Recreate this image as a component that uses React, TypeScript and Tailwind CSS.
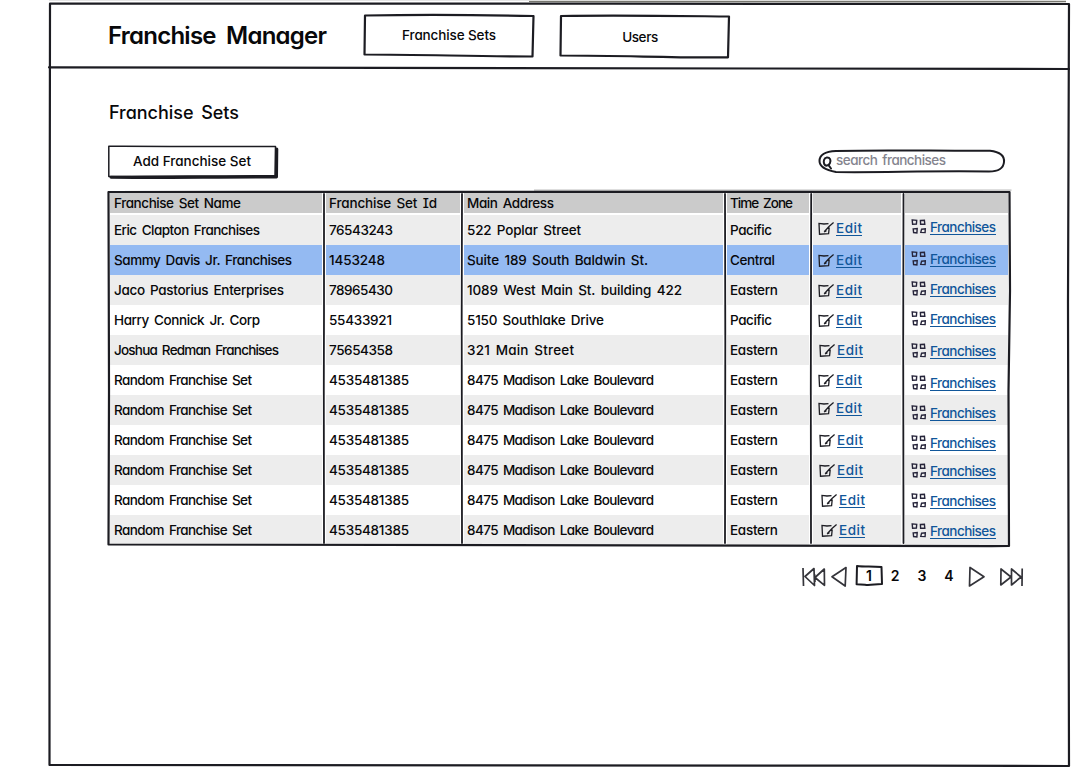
import { useLayoutEffect, useRef, useState } from "react";

const INK = "#1c1c22";

/** Text whose letter spacing is tuned so that it fills the given width. */
function Fit({ w, className = "", children }: { w: number; className?: string; children: string }) {
  const ref = useRef<HTMLSpanElement>(null);
  const [spacing, setSpacing] = useState(0);
  useLayoutEffect(() => {
    if (ref.current && children.length > 1) {
      const natural = ref.current.getBoundingClientRect().width;
      setSpacing((w - natural) / (children.length - 1));
    }
  }, []);
  return (
    <span className={`block whitespace-nowrap ${className}`} style={{ width: w }}>
      <span ref={ref} style={{ letterSpacing: spacing }}>
        {children}
      </span>
    </span>
  );
}

function Outline({ d, width = 2.2, className = "" }: { d: string; width?: number; className?: string }) {
  return (
    <svg
      className={`pointer-events-none absolute left-0 top-0 h-full w-full overflow-visible ${className}`}
      fill="none"
      stroke={INK}
      strokeWidth={width}
      strokeLinejoin="round"
      strokeLinecap="round"
    >
      <path d={d} />
    </svg>
  );
}

function EditIcon() {
  return (
    <svg className="h-[13px] w-4 shrink-0" viewBox="0 0 16 13" fill="none" stroke="#1c1c22" strokeWidth="1.3">
      <path d="M10.5 1.6 6 2 1 1.4 1.5 12.2 10.6 11.7 11.2 5.5M15.6.6 11 4.5 6.5 9.5" />
      <path d="M6 10 8.4 8.6" />
    </svg>
  );
}

function GridIcon() {
  return (
    <svg className="h-[15px] w-4 shrink-0" viewBox="0 0 16 15" fill="none" stroke="#26243a" strokeWidth="1.4">
      <path d="M1.2.9 5.7 1.3 5.4 5 1.6 5.2ZM9.4 1.5 13.4 1.2 13.8 5.2 9.6 5.3ZM2.2 9.9 6.2 9.6 5.9 13.9 2.6 13.5ZM10.6 10.2 14.3 9.8 14.1 13.6 9.8 13.4Z" />
    </svg>
  );
}

type Cell = [string, number];
type Row = { name: Cell; id: Cell; address: Cell; zone: Cell; edit: string; sets: string };

const random = {
  name: ["Random Franchise Set", 138] as Cell,
  id: ["4535481385", 80] as Cell,
  address: ["8475 Madison Lake Boulevard", 187] as Cell,
  zone: ["Eastern", 48] as Cell,
};

const rows: Row[] = [
  { name: ["Eric Clapton Franchises", 146], id: ["76543243", 64], address: ["522 Poplar Street", 114], zone: ["Pacific", 42], edit: "pt-[3px] pl-[5px]", sets: "pt-[2px]" },
  { name: ["Sammy Davis Jr. Franchises", 178], id: ["1453248", 56], address: ["Suite 189 South Baldwin St.", 181], zone: ["Central", 45], edit: "pt-[5px] pl-[5px]", sets: "pt-[4px]" },
  { name: ["Jaco Pastorius Enterprises", 170], id: ["78965430", 64], address: ["1089 West Main St. building 422", 215], zone: ["Eastern", 48], edit: "pt-[5px] pl-[5px]", sets: "pt-[4px]" },
  { name: ["Harry Connick Jr. Corp", 146], id: ["55433921", 63], address: ["5150 Southlake Drive", 137], zone: ["Pacific", 42], edit: "pt-[5px] pl-[5px]", sets: "pt-[4px]" },
  { name: ["Joshua Redman Franchises", 165], id: ["75654358", 64], address: ["321 Main Street", 107], zone: ["Eastern", 48], edit: "pt-[5px] pl-[6px]", sets: "pt-[6px]" },
  { ...random, edit: "pt-[5px] pl-[5px]", sets: "pt-[8px]" },
  { ...random, edit: "pt-[3px] pl-[5px]", sets: "pt-[8px]" },
  { ...random, edit: "pt-[5px] pl-[6px]", sets: "pt-[8px]" },
  { ...random, edit: "pt-[5px] pl-[6px]", sets: "pt-[6px]" },
  { ...random, edit: "pt-[5px] pl-[8px]", sets: "pt-[6px]" },
  { ...random, edit: "pt-[5px] pl-[8px]", sets: "pt-[6px]" },
];

const headers: Cell[] = [
  ["Franchise Set Name", 127],
  ["Franchise Set Id", 108],
  ["Main Address", 87],
  ["Time Zone", 63],
  ["", 0],
  ["", 0],
];

const columns = "grid grid-cols-[212px_134px_259px_82px_88px_103px] gap-x-1";

function TableRow({ row, index }: { row: Row; index: number }) {
  const bg = index === 1 ? "bg-[#94baf2]" : index % 2 === 0 ? "bg-[#ededed]" : "bg-white";
  const cells = [row.name, row.id, row.address, row.zone];
  return (
    <div className={`${columns} h-[30px]`}>
      {cells.map(([text, w], i) => (
        <div key={i} className={`${bg} pt-[5px] ${i === 0 ? "pl-1" : "pl-[3px]"}`}>
          <Fit w={w}>{text}</Fit>
        </div>
      ))}
      <div className={`${bg} ${row.edit} flex items-start gap-[2px]`}>
        <span className="pt-[4px]">
          <EditIcon />
        </span>
        <a className="mt-px h-[17px] border-b border-[#10569a] leading-[18px] text-[#10569a]">
          <Fit w={26}>Edit</Fit>
        </a>
      </div>
      <div className={`${bg} ${row.sets} flex items-start gap-[3px] pl-[6px]`}>
        <span className="pt-[2px]">
          <GridIcon />
        </span>
        <a className="mt-px h-[17px] border-b border-[#10569a] leading-[18px] text-[#10569a]">
          <Fit w={66}>Franchises</Fit>
        </a>
      </div>
    </div>
  );
}

export default function App() {
  return (
    <div className="h-[768px] w-[1072px] overflow-hidden bg-white pl-[49px] pt-[3px] text-[13.5px] font-medium leading-5 text-[#08080a] [font-family:'Comic_Sans_MS',Inter,sans-serif] [font-feature-settings:'cv11','cv08'] [word-spacing:2px]">
      <div className="relative h-[763px] w-[1020px]">
        <Outline d="M1 .5 C300 -.5 700 1.5 1020 1 L1019 300 1020 763 C700 762 400 763 .5 762 L.5 400 1 1" />
        <svg className="pointer-events-none absolute left-0 top-0 h-full w-full overflow-visible" fill="none">
          <path d="M480 -1.5H1017" stroke="#77776f" strokeWidth="1.5" />
          <path d="M0 -2.5H480" stroke="#e6e6e6" strokeWidth="1" />
        </svg>

        <header className="relative flex h-[66px] items-start pl-[59px]">
          <Outline d="M0 64.3 C300 64.5 600 66 1020 66" />
          <h1 className="pt-[17px] text-[24px] font-semibold leading-8 [word-spacing:5px]">
            <Fit w={219}>Franchise Manager</Fit>
          </h1>
          <nav className="flex gap-[26px] pl-[37px] pt-[11px]">
            <button className="relative flex h-[43px] w-[170px] justify-center pt-[11px]">
              <Outline d="M1 1.5 C60 .5 120 1 169.5 2 L168.5 42.5 C110 42.5 60 40.5 .5 40.5 Z" />
              <Fit w={94}>Franchise Sets</Fit>
            </button>
            <button className="relative flex h-[43px] w-[170px] justify-center pr-[10px] pt-[13px]">
              <Outline d="M1 2 C60 1 120 2 169 2.5 L168 43.3 C110 44 70 41.5 .5 41.5 Z" />
              <Fit w={36}>Users</Fit>
            </button>
          </nav>
        </header>

        <main className="pl-[59px]">
          <h2 className="pl-px pt-[32px] text-[18px] leading-6 [word-spacing:3px]">
            <Fit w={130}>Franchise Sets</Fit>
          </h2>

          <div className="flex h-[66px] w-[897px] items-start justify-between pt-[20px]">
            <button className="relative flex h-[34px] w-[170px] pl-[25px] pt-[6px]">
              <Outline d="M3 32.3 C60 33 120 31.5 168.5 32 L168.8 4" width={3} />
              <Outline d="M.8 1.2 C60 1 120 2 167.5 1.5 L167 30.5 C110 31.5 50 30.5 .8 31.5 Z" width={1.5} />
              <Fit w={118}>Add Franchise Set</Fit>
            </button>
            <div className="relative mt-[5px] flex h-[23px] w-[186px] pl-[17px]">
              <Outline
                d="M17 1 C70 -.5 120 1.2 171 .8 C182 2 185.5 6 185 12 C184.5 18 179 21.5 170 21.5 C110 20.5 60 22.8 17 22 C6 20 .5 17 .5 11 C.5 5 6 1.5 17 1 Z"
                width={2}
              />
              <Outline
                d="M7.8 7.6 C4.8 8 4.2 11.5 5.2 14 C6.4 16.5 9.5 16 10.9 13.2 C12.2 10 11.2 7.5 7.8 7.6 M9.5 15.2 12 18.5"
                width={2}
              />
              <Fit w={110} className="text-[#84848e]">
                search franchises
              </Fit>
            </div>
          </div>

          <section className="relative ml-px h-[355px] w-[902px] pl-px pt-[2px]">
            <svg className="pointer-events-none absolute left-0 top-0 h-full w-full overflow-visible" fill="none">
              <path d="M425 -.8H902.5" stroke="#bdbdbd" strokeWidth="1.2" />
            </svg>
            <div className={`${columns} mb-[3px] h-[19px]`}>
              {headers.map(([text, w], i) => (
                <div key={i} className={`bg-[#cbcbcb] ${i === 0 ? "pl-1" : "pl-[3px]"}`}>
                  {text && <Fit w={w}>{text}</Fit>}
                </div>
              ))}
            </div>
            {rows.map((row, i) => (
              <TableRow key={i} row={row} index={i} />
            ))}
            <Outline d="M-.5 1 C300 0 600 1.5 900.5 1 L901 100 899.5 200 900 355 C600 356 300 353.5 -.5 353.5 L0 200 Z" />
            <Outline
              d="M215 3 215 120 214.8 200 215 352M353 3 352.7 130 353 352M616 3 616.3 150 616 352M702.2 3 701.8 200 702 352M794.5 3 794.2 150 794.5 352"
              width={1.8}
            />
          </section>

          <div className="flex h-[60px] items-start pl-[694px] pt-[19px] text-[14px]">
            <svg className="h-[24px] w-[46px] shrink-0" fill="none" stroke="#34343a" strokeWidth="1.7" strokeLinejoin="round">
              <path d="M1 3 1.5 21M12 3.5 3 11.5 12.5 20.5ZM22.3 4 13 12.5 22.5 20.3ZM12.5 9 13 17" />
              <path d="M44 2.5 30 11.7 43.2 21Z" />
            </svg>
            <div className="relative ml-[8px] h-[21px] w-[26px] pl-[8px] pt-[1px] text-center font-semibold">
              <Outline d="M1 1 C9 2 16 1 25.5 2 L26 19 C20 18.8 14 20.6 9 19.7 L.6 19.2 Z" width={2} />
              <span className="block w-[10px]">1</span>
            </div>
            <div className="flex gap-[17px] pl-[8px] pt-[1px] font-semibold">
              <span className="w-[10px] text-center">2</span>
              <span className="w-[10px] text-center">3</span>
              <span className="w-[10px] text-center">4</span>
            </div>
            <svg className="ml-[14px] h-[24px] w-[57px] shrink-0" fill="none" stroke="#34343a" strokeWidth="1.7" strokeLinejoin="round">
              <path d="M2 2.5 1.5 21 16 11.7Z" />
              <path d="M33 4 32.8 20 43 12ZM43.5 4 43.5 20 53 12ZM54.2 3.5 54 21" />
            </svg>
          </div>
        </main>
      </div>
    </div>
  );
}
